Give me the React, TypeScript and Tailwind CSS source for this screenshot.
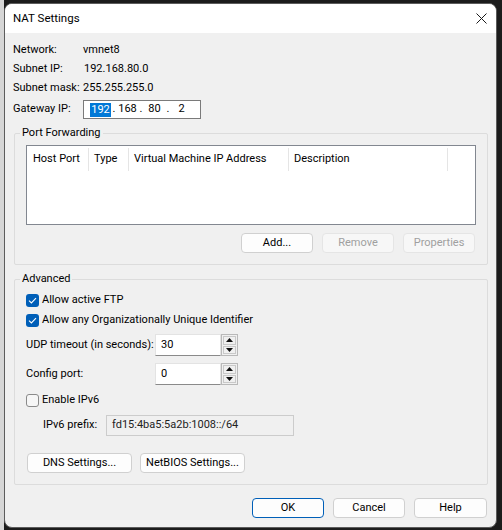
import React from 'react';

type BtnProps = {
  label: string;
  w?: string;
  disabled?: boolean;
  primary?: boolean;
};

function Btn({ label, w = 'w-[72px]', disabled, primary }: BtnProps) {
  const tone = primary
    ? 'border-[#005fb8] bg-[#fdfdfd] text-black'
    : disabled
      ? 'border-[#e5e5e5] bg-[#f7f7f7] text-[#a0a0a0]'
      : 'border-[#d0d0d0] bg-[#fdfdfd] text-black';
  return (
    <div className={`${w} h-[20px] shrink-0 flex items-center justify-center rounded-[4px] border ${tone}`}>
      {label}
    </div>
  );
}

function Check({ checked, label }: { checked?: boolean; label: string }) {
  return (
    <div className="flex items-center h-[16px]">
      {checked ? (
        <div className="w-[13px] h-[13px] shrink-0 rounded-[3px] bg-[#005fb8] flex items-center justify-center">
          <svg width="9" height="7" viewBox="0 0 9 7">
            <path d="M1 3.6 L3.4 6 L8 1.2" stroke="white" strokeWidth="1.1" fill="none" />
          </svg>
        </div>
      ) : (
        <div className="w-[13px] h-[13px] shrink-0 rounded-[3px] border border-[#8a8a8a] bg-[#f6f6f6]" />
      )}
      <span className="ml-[3px] whitespace-nowrap">{label}</span>
    </div>
  );
}

function Group({ title, className, children }: { title: string; className?: string; children: React.ReactNode }) {
  return (
    <div className={`relative shrink-0 border border-[#dcdcdc] rounded-[2px] ${className ?? ''}`}>
      <span className="absolute -top-[9px] left-[5px] px-[2px] bg-[#f0f0f0] leading-[16px]">{title}</span>
      {children}
    </div>
  );
}

function Spin({ value }: { value: string }) {
  return (
    <div className="flex h-[22px] shrink-0">
      <div className="w-[66px] h-full bg-white border border-[#e3e3e3] border-b-[#8a8a8a] flex items-center pl-[5px]">
        {value}
      </div>
      <div className="w-[17px] h-full border border-[#b9b9b9] flex flex-col bg-[#f0f0f0]">
        <div className="flex-1 m-[1px] mb-0 border border-[#c9c9c9] flex items-center justify-center">
          <svg width="7" height="4" viewBox="0 0 7 4"><path d="M3.5 0 L7 4 L0 4 Z" fill="#111" /></svg>
        </div>
        <div className="flex-1 m-[1px] border border-[#c9c9c9] flex items-center justify-center">
          <svg width="7" height="4" viewBox="0 0 7 4"><path d="M0 0 L7 0 L3.5 4 Z" fill="#111" /></svg>
        </div>
      </div>
    </div>
  );
}

const columns = [
  { title: 'Host Port', w: 'w-[62px] pl-[6px]' },
  { title: 'Type', w: 'w-[40px] pl-[5px]' },
  { title: 'Virtual Machine IP Address', w: 'w-[160px] pl-[5px]' },
  { title: 'Description', w: 'w-[159px] pl-[5px]' },
];

export default function App() {
  return (
    <div className="w-[502px] h-[530px] bg-[#1c1c1c] flex overflow-hidden font-['Roboto',sans-serif] text-[11px] text-black whitespace-nowrap">
      <div className="w-[4px] h-full shrink-0 bg-[#d6d6d6]" />
      <div className="mt-[3px] w-[493px] h-[525px] shrink-0 rounded-[8px] border border-[#5c5c5c] bg-[#f0f0f0] overflow-hidden flex flex-col">
        {/* title bar */}
        <div className="h-[29px] shrink-0 bg-white flex items-center justify-between pl-[8px] pr-[9px]">
          <span className="text-[11.5px]">NAT Settings</span>
          <svg width="11" height="11" viewBox="0 0 11 11">
            <path d="M0.5 0.5 L10.5 10.5 M10.5 0.5 L0.5 10.5" stroke="#1a1a1a" strokeWidth="1" />
          </svg>
        </div>

        <div className="flex flex-col shrink-0 pl-[9px] pr-[8px] pt-[9px]">
          <div className="flex h-[16px] items-center -ml-[1px]">
            <span className="w-[70px] shrink-0">Network:</span>
            <span>vmnet8</span>
          </div>
          <div className="flex h-[16px] items-center -ml-[1px] mt-[3px]">
            <span className="w-[71px] shrink-0">Subnet IP:</span>
            <span>192.168.80.0</span>
          </div>
          <div className="flex h-[16px] items-center -ml-[1px] mt-[3px]">
            <span className="w-[70px] shrink-0">Subnet mask:</span>
            <span>255.255.255.0</span>
          </div>
          <div className="flex h-[19px] items-center -ml-[1px] mt-[4px]">
            <span className="w-[70px] shrink-0">Gateway IP:</span>
            <div className="w-[118px] h-full border border-[#7a7a7a] bg-white flex items-center pl-[7px]">
              <span className="w-[19px] flex justify-center">
                <span className="bg-[#0078d7] text-white px-[1px] leading-[14px]">192</span>
              </span>
              <span className="w-[8px] text-center">.</span>
              <span className="w-[19px] text-center">168</span>
              <span className="w-[8px] text-center">.</span>
              <span className="w-[19px] text-center">80</span>
              <span className="w-[8px] text-center">.</span>
              <span className="w-[19px] text-center">2</span>
            </div>
          </div>

          <Group title="Port Forwarding" className="mt-[14px] pl-[11px] pt-[11px] pb-[11px]">
            <div className="w-[450px] h-[80px] bg-white border border-[#828790]">
              <div className="flex h-[23px] mt-[2px]">
                {columns.map((c) => (
                  <div key={c.title} className={`${c.w} h-full flex items-center border-r border-[#e5e5e5]`}>
                    {c.title}
                  </div>
                ))}
              </div>
            </div>
            <div className="w-[449px] flex justify-end gap-[9px] mt-[8px]">
              <Btn label="Add..." />
              <Btn label="Remove" disabled />
              <Btn label="Properties" disabled />
            </div>
          </Group>

          <Group title="Advanced" className="mt-[14px] pl-[11px] pt-[12px] pb-[11px]">
            <Check checked label="Allow active FTP" />
            <div className="mt-[4px]">
              <Check checked label="Allow any Organizationally Unique Identifier" />
            </div>
            <div className="flex items-center mt-[6px]">
              <span className="w-[129px] shrink-0">UDP timeout (in seconds):</span>
              <Spin value="30" />
            </div>
            <div className="flex items-center mt-[7px]">
              <span className="w-[129px] shrink-0">Config port:</span>
              <Spin value="0" />
            </div>
            <div className="mt-[7px]">
              <Check label="Enable IPv6" />
            </div>
            <div className="flex items-center mt-[7px] ml-[17px]">
              <span className="w-[63px] shrink-0">IPv6 prefix:</span>
              <div className="w-[188px] h-[21px] border border-[#cccccc] bg-[#f0f0f0] flex items-center pl-[5px] text-[#222]">
                fd15:4ba5:5a2b:1008::/64
              </div>
            </div>
            <div className="flex gap-[8px] mt-[17px] ml-[1px]">
              <Btn label="DNS Settings..." w="w-[105px]" />
              <Btn label="NetBIOS Settings..." w="w-[105px]" />
            </div>
          </Group>
        </div>

        <div className="flex shrink-0 justify-end gap-[9px] pr-[9px] mt-[13px]">
          <Btn label="OK" primary />
          <Btn label="Cancel" />
          <Btn label="Help" w="w-[73px]" />
        </div>
      </div>
    </div>
  );
}
